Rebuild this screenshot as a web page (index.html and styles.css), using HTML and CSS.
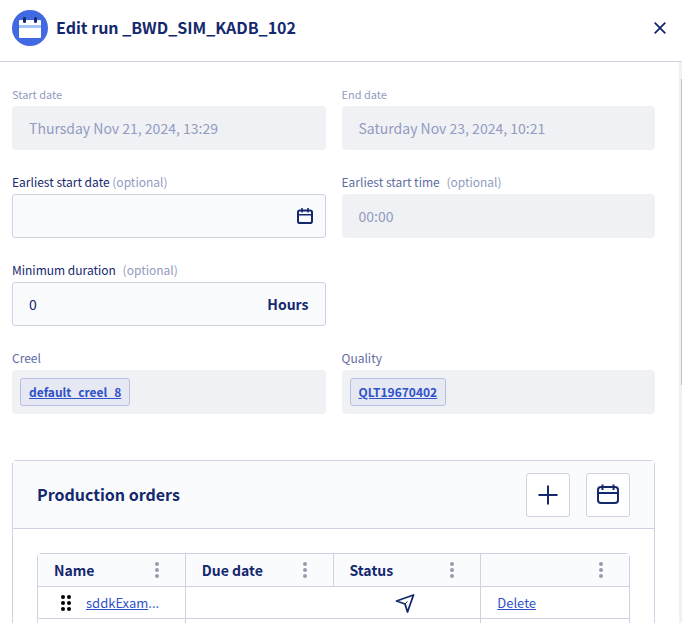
FILE: index.html
```html
<!DOCTYPE html>
<html lang="en">
<head>
  <meta charset="utf-8">
  <meta name="viewport" content="width=device-width, initial-scale=1">
  <title>Edit run</title>
  <link rel="stylesheet" href="styles.css">
</head>
<body>
  <div class="dialog">
    <header class="dialog-header">
      <svg class="dialog-logo" width="36" height="36" viewBox="0 0 36 36" aria-hidden="true">
        <circle cx="18" cy="18" r="18" fill="#4169e1"/>
        <rect x="7" y="10" width="22" height="18" rx="1" fill="#fff"/>
        <rect x="7" y="15" width="22" height="3" fill="#a3c3fb"/>
        <rect x="11" y="7" width="3" height="6" rx="1.5" fill="#14286e"/>
        <rect x="22" y="7" width="3" height="6" rx="1.5" fill="#14286e"/>
      </svg>
      <h1 class="dialog-title">Edit run _BWD_SIM_KADB_102</h1>
      <button type="button" class="close-button" aria-label="Close">
        <svg width="12" height="12" viewBox="0 0 12 12"><path d="M0.7 0.7L11.3 11.3M11.3 0.7L0.7 11.3" stroke="currentColor" stroke-width="1.8" fill="none"/></svg>
      </button>
    </header>

    <div class="dialog-body">
      <main class="content">
        <form class="fields">
          <div class="field">
            <label class="label label-muted" for="startDate">Start date</label>
            <input class="box box-disabled" id="startDate" type="text" value="Thursday Nov 21, 2024, 13:29" disabled>
          </div>
          <div class="field">
            <label class="label label-muted" for="endDate">End date</label>
            <input class="box box-disabled" id="endDate" type="text" value="Saturday Nov 23, 2024, 10:21" disabled>
          </div>

          <div class="field">
            <label class="label" for="earliestDate">Earliest start date <span class="optional">(optional)</span></label>
            <div class="box box-group">
              <input class="box-input" id="earliestDate" type="text">
              <button type="button" class="icon-button" aria-label="Pick a date">
                <svg width="16" height="16" viewBox="0 0 16 16" fill="none" stroke="currentColor" stroke-width="2"><rect x="1" y="2.5" width="14" height="12.5" rx="1.8"/><path d="M1 6.7H15M5 0V4.5M11 0V4.5" stroke-width="1.6"/></svg>
              </button>
            </div>
          </div>
          <div class="field">
            <label class="label label-readonly" for="earliestTime">Earliest start time <span class="optional optional-spaced">(optional)</span></label>
            <input class="box box-disabled" id="earliestTime" type="text" value="00:00" disabled>
          </div>

          <div class="field field-row-start">
            <label class="label" for="duration">Minimum duration <span class="optional optional-spaced">(optional)</span></label>
            <div class="box box-group">
              <input class="box-input" id="duration" type="text" value="0">
              <span class="unit">Hours</span>
            </div>
          </div>

          <div class="field field-row-start">
            <span class="label label-readonly">Creel</span>
            <div class="box box-disabled box-tags"><a class="tag" href="#">default_creel_8</a></div>
          </div>
          <div class="field">
            <span class="label label-readonly">Quality</span>
            <div class="box box-disabled box-tags"><a class="tag" href="#">QLT19670402</a></div>
          </div>
        </form>

        <section class="card">
          <div class="card-header">
            <h2 class="card-title">Production orders</h2>
            <button type="button" class="square-button" aria-label="Add order">
              <svg width="20" height="20" viewBox="0 0 20 20"><path d="M10 0.5V19.5M0.5 10H19.5" stroke="currentColor" stroke-width="2"/></svg>
            </button>
            <button type="button" class="square-button" aria-label="Open calendar">
              <svg width="24" height="22" viewBox="0 0 24 22" fill="none" stroke="currentColor" stroke-width="2"><rect x="2" y="3" width="20" height="16" rx="3"/><path d="M2 9H22M6.5 0.5V6M17.5 0.5V6"/></svg>
            </button>
          </div>
          <div class="card-body">
            <table class="orders">
              <thead>
                <tr>
                  <th><div class="th-inner">Name <button type="button" class="menu-button" aria-label="Name menu"><svg width="4" height="16" viewBox="0 0 4 16" fill="currentColor"><circle cx="2" cy="2" r="2"/><circle cx="2" cy="8" r="2"/><circle cx="2" cy="14" r="2"/></svg></button></div></th>
                  <th><div class="th-inner">Due date <button type="button" class="menu-button" aria-label="Due date menu"><svg width="4" height="16" viewBox="0 0 4 16" fill="currentColor"><circle cx="2" cy="2" r="2"/><circle cx="2" cy="8" r="2"/><circle cx="2" cy="14" r="2"/></svg></button></div></th>
                  <th><div class="th-inner">Status <button type="button" class="menu-button" aria-label="Status menu"><svg width="4" height="16" viewBox="0 0 4 16" fill="currentColor"><circle cx="2" cy="2" r="2"/><circle cx="2" cy="8" r="2"/><circle cx="2" cy="14" r="2"/></svg></button></div></th>
                  <th><div class="th-inner"><button type="button" class="menu-button" aria-label="Actions menu"><svg width="4" height="16" viewBox="0 0 4 16" fill="currentColor"><circle cx="2" cy="2" r="2"/><circle cx="2" cy="8" r="2"/><circle cx="2" cy="14" r="2"/></svg></button></div></th>
                </tr>
              </thead>
              <tbody>
                <tr>
                  <td>
                    <div class="name-cell">
                      <button type="button" class="drag-button" aria-label="Move row">
                        <svg width="10" height="16" viewBox="0 0 10 16" fill="#000"><circle cx="2" cy="2" r="2"/><circle cx="8" cy="2" r="2"/><circle cx="2" cy="8" r="2"/><circle cx="8" cy="8" r="2"/><circle cx="2" cy="14" r="2"/><circle cx="8" cy="14" r="2"/></svg>
                      </button>
                      <span><a class="link" href="#">sddkExam</a>...</span>
                    </div>
                  </td>
                  <td class="cell-open"></td>
                  <td class="cell-status">
                    <svg class="status-icon" width="20" height="20" viewBox="0 0 20 20" fill="none" stroke="currentColor" stroke-width="1.8" stroke-linejoin="round"><path d="M1.5 8L18.5 2L12.5 19L10 11Z"/><path d="M10 11L12.5 8.5" stroke-width="1"/></svg>
                  </td>
                  <td><a class="link" href="#">Delete</a></td>
                </tr>
                <tr>
                  <td></td>
                  <td class="cell-open"></td>
                  <td></td>
                  <td></td>
                </tr>
              </tbody>
            </table>
          </div>
        </section>
      </main>
      <div class="scrollbar"><div class="scrollbar-thumb"></div></div>
    </div>
  </div>
</body>
</html>
```
FILE: styles.css
```css
* {
  box-sizing: border-box;
}

body {
  margin: 0;
  font-family: "Noto Sans CJK SC", "Noto Sans", sans-serif;
  font-size: 14px;
  line-height: 20px;
  color: #14286e;
  background: #fff;
}

button {
  display: flex;
  align-items: center;
  justify-content: center;
  padding: 0;
  border: none;
  background: none;
  color: inherit;
  cursor: pointer;
}

input {
  font: inherit;
  color: inherit;
}

/* Dialog */
.dialog {
  display: flex;
  flex-direction: column;
  height: 100vh;
  overflow: hidden;
}

.dialog-header {
  display: flex;
  align-items: center;
  gap: 8px;
  padding: 10px 12px 15px;
  border-bottom: 1px solid #d0d2e3;
}

.dialog-title {
  flex: 1;
  margin: 0;
  padding-bottom: 2px;
  font-size: 16px;
  line-height: 24px;
  font-weight: 700;
}

.close-button {
  width: 20px;
  height: 20px;
}

.dialog-body {
  display: flex;
  flex: 1;
  min-height: 0;
}

.content {
  flex: 1;
  min-width: 0;
  padding: 24px 24px 24px 12px;
  overflow: hidden;
}

.scrollbar {
  width: 3px;
  padding: 17px 0 17px 2px;
  background: #f1f1f1;
}

.scrollbar-thumb {
  height: 58%;
  background: #c1c1c1;
}

/* Form */
.fields {
  display: grid;
  grid-template-columns: 1fr 1fr;
  gap: 24px 16px;
  margin-bottom: 46px;
}

.field {
  min-width: 0;
}

.field-row-start {
  grid-column-start: 1;
}

.label {
  display: block;
  margin-bottom: 4px;
  font-size: 12px;
  line-height: 16px;
}

.label-muted {
  font-size: 11px;
}

.label-muted,
.optional {
  color: #929bc0;
}

.label-readonly {
  color: #5f6ca3;
}

.optional-spaced {
  margin-left: 4px;
}

.box {
  display: flex;
  align-items: center;
  width: 100%;
  height: 44px;
  padding: 0 16px;
  border: 1px solid #d0d2e3;
  border-radius: 3px;
  background: #fafbfd;
}

.box-disabled {
  border-color: #f0f1f5;
  background: #f0f1f5;
  color: #929bc0;
}

.box-group {
  padding: 0 12px 0 0;
}

.box-input {
  flex: 1;
  min-width: 0;
  height: 100%;
  padding: 0 16px;
  border: none;
  background: none;
  outline: none;
}

.icon-button {
  width: 16px;
  height: 24px;
}

.unit {
  padding-right: 4px;
  font-weight: 700;
}

.box-tags {
  padding: 0 7px;
}

.tag {
  padding: 3px 8px;
  border: 1px solid #b8bfdc;
  border-radius: 3px;
  background: #e6e8f3;
  color: #2f52c8;
  font-size: 12px;
  font-weight: 700;
}

.link {
  color: #2f52c8;
}

/* Production orders */
.card {
  border: 1px solid #d0d2e3;
  border-radius: 4px;
}

.card-header {
  display: flex;
  align-items: center;
  gap: 16px;
  padding: 12px 24px 11px;
  border-bottom: 1px solid #d0d2e3;
  background: #fafbfd;
}

.card-title {
  flex: 1;
  margin: 0;
  padding-bottom: 2px;
  font-size: 16px;
  line-height: 24px;
  font-weight: 700;
}

.square-button {
  width: 44px;
  height: 44px;
  border: 1px solid #d0d2e3;
  border-radius: 3px;
  background: #fff;
}

.card-body {
  padding: 24px;
}

.orders {
  width: 100%;
  table-layout: fixed;
  border: 1px solid #d0d2e3;
  border-radius: 4px;
  border-spacing: 0;
}

.orders th,
.orders td {
  height: 32px;
  padding: 0 16px;
  border-right: 1px solid #d0d2e3;
  border-bottom: 1px solid #d0d2e3;
  text-align: left;
  font-size: 13px;
}

.orders th {
  height: 33px;
  background: #fafbfd;
  font-size: 14px;
  font-weight: 700;
}

.orders th:last-child,
.orders td:last-child,
.orders .cell-open {
  border-right: none;
}

.th-inner {
  display: flex;
  align-items: center;
}

.menu-button {
  width: 24px;
  height: 20px;
  margin-left: auto;
  color: #959cae;
}

.name-cell {
  display: flex;
  align-items: center;
  gap: 8px;
  color: #2f52c8;
}

.drag-button {
  width: 24px;
  height: 20px;
}

.status-icon {
  display: block;
  margin: 0 auto;
}

.orders .cell-status {
  padding-right: 20px;
}
```
